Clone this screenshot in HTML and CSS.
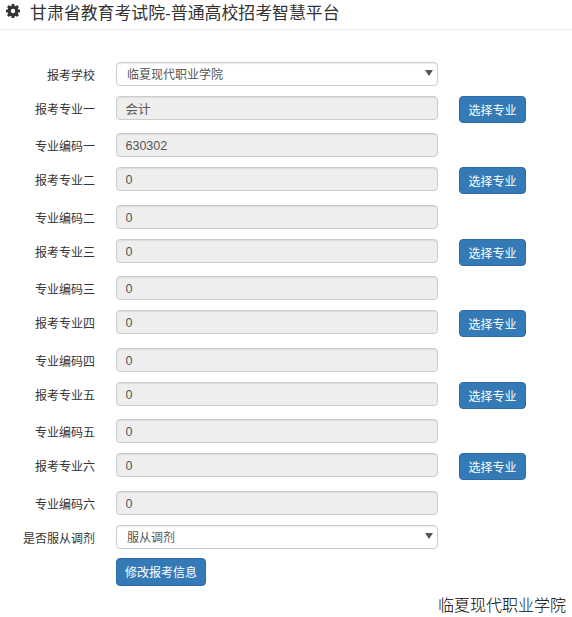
FILE: index.html
```html
<!DOCTYPE html>
<html lang="zh-CN">
<head>
  <meta charset="UTF-8" />
  <title>甘肃省教育考试院-普通高校招考智慧平台</title>
  <link rel="stylesheet" href="styles.css">
</head>
<body>
  <div class="page-header">
    <svg class="cog" viewBox="0 0 14 14" aria-hidden="true">
      <circle cx="7" cy="7" r="3.9" fill="none" stroke="#333" stroke-width="3.2"/>
      <g stroke="#333" stroke-width="2.8">
        <line x1="7" y1="0" x2="7" y2="14"/>
        <line x1="0" y1="7" x2="14" y2="7"/>
        <line x1="2" y1="2" x2="12" y2="12"/>
        <line x1="12" y1="2" x2="2" y2="12"/>
      </g>
      <circle cx="7" cy="7" r="2.2" fill="#fff"/>
    </svg>
    <h1>甘肃省教育考试院-普通高校招考智慧平台</h1>
  </div>

  <form class="info-form">
    <div class="form-row">
      <label>报考学校</label>
      <div class="select-wrap">
        <select class="form-control"><option>临夏现代职业学院</option></select>
      </div>
    </div>

    <div class="form-row pick-row">
      <label>报考专业一</label>
      <input class="form-control" value="会计" disabled />
      <button type="button" class="btn">选择专业</button>
    </div>
    <div class="form-row">
      <label>专业编码一</label>
      <input class="form-control" value="630302" disabled />
    </div>

    <div class="form-row pick-row">
      <label>报考专业二</label>
      <input class="form-control" value="0" disabled />
      <button type="button" class="btn">选择专业</button>
    </div>
    <div class="form-row">
      <label>专业编码二</label>
      <input class="form-control" value="0" disabled />
    </div>

    <div class="form-row pick-row">
      <label>报考专业三</label>
      <input class="form-control" value="0" disabled />
      <button type="button" class="btn">选择专业</button>
    </div>
    <div class="form-row">
      <label>专业编码三</label>
      <input class="form-control" value="0" disabled />
    </div>

    <div class="form-row pick-row">
      <label>报考专业四</label>
      <input class="form-control" value="0" disabled />
      <button type="button" class="btn">选择专业</button>
    </div>
    <div class="form-row">
      <label>专业编码四</label>
      <input class="form-control" value="0" disabled />
    </div>

    <div class="form-row pick-row">
      <label>报考专业五</label>
      <input class="form-control" value="0" disabled />
      <button type="button" class="btn">选择专业</button>
    </div>
    <div class="form-row">
      <label>专业编码五</label>
      <input class="form-control" value="0" disabled />
    </div>

    <div class="form-row pick-row">
      <label>报考专业六</label>
      <input class="form-control" value="0" disabled />
      <button type="button" class="btn">选择专业</button>
    </div>
    <div class="form-row">
      <label>专业编码六</label>
      <input class="form-control" value="0" disabled />
    </div>

    <div class="form-row">
      <label>是否服从调剂</label>
      <div class="select-wrap">
        <select class="form-control"><option>服从调剂</option></select>
      </div>
    </div>

    <div class="form-row submit-row">
      <button type="button" class="btn">修改报考信息</button>
    </div>
  </form>

  <div class="school-name">临夏现代职业学院</div>
</body>
</html>
```

FILE: styles.css
```css
body {
  margin: 0;
  font-family: "Liberation Sans", "Noto Sans CJK SC", sans-serif;
  font-size: 12px;
  color: #333;
  background: #fff;
}

.page-header {
  display: flex;
  align-items: center;
  gap: 10px;
  height: 22px;
  padding: 0 0 7px 6px;
  border-bottom: 1px solid #eee;
}

.cog {
  width: 14px;
  height: 14px;
}

.page-header h1 {
  margin: 0;
  font-size: 16.9px;
  font-weight: normal;
  color: #333;
}

.info-form {
  padding-top: 31.75px;
}

.form-row {
  display: flex;
  align-items: flex-start;
  margin-bottom: 10px;
}

.pick-row {
  height: 27.5px;
}

.form-row label {
  width: 95px;
  height: 24px;
  margin-right: 21px;
  text-align: right;
  line-height: 29px;
  color: #333;
}

.form-control {
  box-sizing: border-box;
  display: block;
  width: 322px;
  height: 24px;
  padding: 0 9px;
  font-family: inherit;
  font-size: 12px;
  color: #555;
  background: #fff;
  border: 1px solid #ccc;
  border-radius: 4px;
  box-shadow: inset 0 1px 1px rgba(0, 0, 0, .075);
}

input.form-control {
  padding: 2px 9px 0 8.5px;
  font-size: 12.5px;
  background: #eee;
  -webkit-text-fill-color: #555;
  opacity: 1;
}

select.form-control {
  appearance: none;
  padding: 2px 0 0 10px;
}

.select-wrap {
  position: relative;
}

.select-wrap::after {
  content: "";
  position: absolute;
  right: 5px;
  top: 8px;
  border-left: 4px solid transparent;
  border-right: 4px solid transparent;
  border-top: 6px solid #555;
}

.btn {
  box-sizing: border-box;
  height: 27px;
  padding: 0 8px;
  font-family: inherit;
  font-size: 12px;
  color: #fff;
  background: #337ab7;
  border: 1px solid #2e6da4;
  border-radius: 4px;
}

.pick-row .btn {
  width: 67px;
  margin-left: 21px;
}

.submit-row {
  margin: -1px 0 0 116px;
}

.submit-row .btn {
  width: 90px;
  height: 28px;
}

.school-name {
  margin-top: 10px;
  text-align: right;
  padding-right: 6px;
  font-size: 16px;
  font-weight: 300;
  line-height: 20px;
  color: #000;
}
```
